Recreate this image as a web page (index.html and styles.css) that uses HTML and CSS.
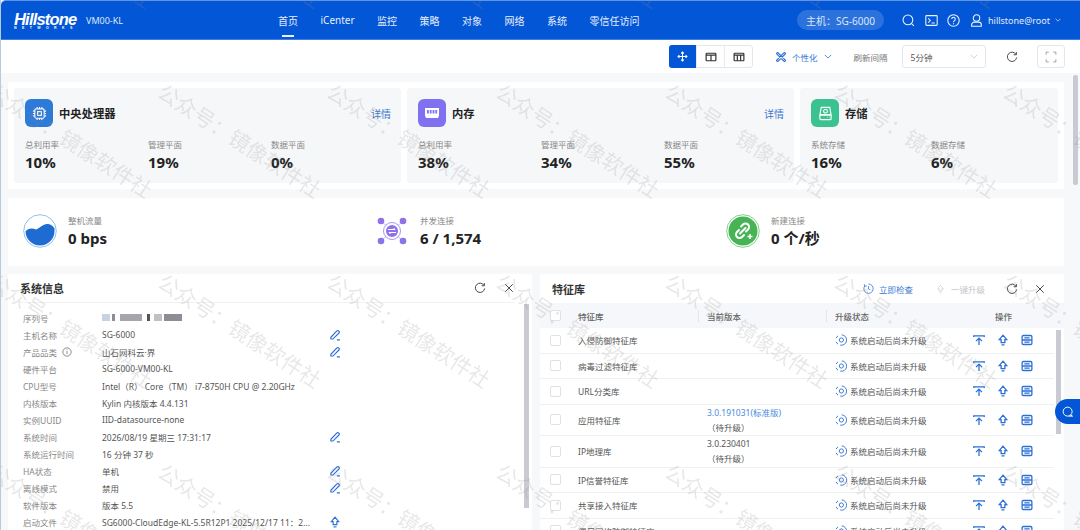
FILE: index.html
```html
<!DOCTYPE html>
<html lang="zh-CN">
<head>
    <meta charset="UTF-8">
    <title>Hillstone</title>
    <link rel="stylesheet" href="styles.css">
</head>
<body>
    <!-- shared icons -->
    <svg class="defs" width="0" height="0">
        <symbol id="i-refresh" viewBox="0 0 16 16"><path d="M13.4 4.6A6.2 6.2 0 1 0 14.2 8.6"/><path d="M13.8 1.4v3.6h-3.6"/></symbol>
        <symbol id="i-close" viewBox="0 0 16 16"><path d="M3 3l10 10M13 3L3 13"/></symbol>
        <symbol id="i-edit" viewBox="0 0 16 16"><path d="M2.5 11 10.6 2.6a1.6 1.6 0 0 1 2.3 0l.4.4a1.6 1.6 0 0 1 0 2.3L5.2 13.4H2.5z"/><path d="M10.5 14.500h4"/></symbol>
        <symbol id="i-top" viewBox="0 0 16 16"><path d="M1 4V2.500h14V4"/><path d="M8 14.500V6M4 9.500 8 5.500l4 4"/></symbol>
        <symbol id="i-up" viewBox="0 0 16 16"><path d="M8 1.500 13 7.500H10.500V11.500H5.500V7.500H3z"/><path d="M6 14.500h4"/></symbol>
        <symbol id="i-rack" viewBox="0 0 16 16"><rect x="1.500" y="2" width="13" height="12" rx="1.500"/><path d="M1.500 8h13M4.500 5.200h7M4.500 10.900h7"/></symbol>
        <symbol id="i-status" viewBox="0 0 16 16"><path d="M9 1.200a6.900 6.900 0 1 1-2 13.600"/><path d="M1.500 5.500A6.900 6.900 0 0 1 4 2.500M4 13.500a6.900 6.900 0 0 1-2.500-3"/><circle cx="8.500" cy="8" r="2.800"/></symbol>
    </svg>

    <div class="app">
        <!-- Top navigation -->
        <header class="topbar">
            <div class="logo">
                <span class="logo-name">Hillstone</span>
                <span class="logo-sub">NETWORKS</span>
            </div>
            <span class="device">VM00-KL</span>
            <nav class="nav">
                <a class="nav-item active">首页</a>
                <a class="nav-item">iCenter</a>
                <a class="nav-item">监控</a>
                <a class="nav-item">策略</a>
                <a class="nav-item">对象</a>
                <a class="nav-item">网络</a>
                <a class="nav-item">系统</a>
                <a class="nav-item">零信任访问</a>
            </nav>
            <span class="host">主机：SG-6000</span>
            <div class="top-icons">
                <svg class="top-icon" viewBox="0 0 16 16"><circle cx="7.300" cy="7.300" r="6"/><path d="M11.700 11.700l3 3"/></svg>
                <svg class="top-icon" viewBox="0 0 16 16"><rect x="1" y="2" width="14" height="12" rx="1"/><path d="M4 5.500 6.500 8 4 10.500M8 11h4"/></svg>
                <svg class="top-icon" viewBox="0 0 16 16"><circle cx="8" cy="8" r="7"/><path d="M5.800 6.200a2.200 2.200 0 1 1 3.400 1.900C8.500 8.600 8 9 8 10M8 11.500v1"/></svg>
                <svg class="top-icon" viewBox="0 0 16 16"><circle cx="8" cy="5" r="4"/><path d="M2 15v-1.500A3.500 3.500 0 0 1 5.500 10h5a3.500 3.500 0 0 1 3.500 3.500V15z"/></svg>
            </div>
            <span class="user">hillstone@root</span>
            <svg class="user-caret" viewBox="0 0 10 6"><path d="M1 1l4 4 4-4"/></svg>
        </header>

        <!-- Toolbar -->
        <div class="toolbar">
            <div class="layout-btns">
                <span class="layout-btn on">
                    <svg viewBox="0 0 16 16"><path d="M8 2v12M2 8h12M6 3.500 8 1.500l2 2M6 12.500l2 2 2-2M3.500 6l-2 2 2 2M12.500 6l2 2-2 2"/></svg>
                </span>
                <span class="layout-btn">
                    <svg viewBox="0 0 16 16"><rect x="1.500" y="3" width="13" height="10" rx="1"/><path d="M1.500 5.500h13M8 5v8"/></svg>
                </span>
                <span class="layout-btn">
                    <svg viewBox="0 0 16 16"><rect x="1.500" y="3" width="13" height="10" rx="1"/><path d="M1.500 5.500h13M5.800 5v8M10.200 5v8"/></svg>
                </span>
            </div>
            <svg class="custom-icon" viewBox="0 0 16 16"><path d="M3.500 1.500 14.500 12.500a1.400 1.400 0 0 1-2 2L1.500 3.500a1.400 1.400 0 0 1 2-2zM12.500 1.500 1.500 12.500a1.400 1.400 0 0 0 2 2L14.500 3.500a1.400 1.400 0 0 0-2-2z"/></svg>
            <span class="custom-text">个性化</span>
            <svg class="custom-caret" viewBox="0 0 10 6"><path d="M1 1l4 4 4-4"/></svg>
            <span class="refresh-label">刷新间隔</span>
            <div class="select">
                <span>5分钟</span>
                <svg viewBox="0 0 10 6"><path d="M1 1l4 4 4-4"/></svg>
            </div>
            <svg class="tool-refresh ico"><use href="#i-refresh"/></svg>
            <span class="full-btn">
                <svg viewBox="0 0 16 16"><path d="M1.500 5V1.500H5M11 1.500h3.500V5M14.500 11v3.500H11M5 14.500H1.500V11"/></svg>
            </span>
        </div>

        <main class="main">
            <!-- Resource cards -->
            <section class="cards">
                <div class="card">
                    <div class="card-head">
                        <span class="card-icon cpu">
                            <svg viewBox="0 0 16 16"><rect x="3" y="3" width="10" height="10" rx="1.500"/><rect x="6" y="6" width="4" height="4"/><path d="M5.500 1v2M8 1v2M10.500 1v2M5.500 13v2M8 13v2M10.500 13v2M1 5.500h2M1 8h2M1 10.500h2M13 5.500h2M13 8h2M13 10.500h2"/></svg>
                        </span>
                        <h3 class="card-title">中央处理器</h3>
                        <a class="card-link">详情</a>
                    </div>
                    <div class="metrics">
                        <div><p class="metric-label">总利用率</p><p class="metric-value">10%</p></div>
                        <div><p class="metric-label">管理平面</p><p class="metric-value">19%</p></div>
                        <div><p class="metric-label">数据平面</p><p class="metric-value">0%</p></div>
                    </div>
                </div>
                <div class="card">
                    <div class="card-head">
                        <span class="card-icon mem">
                            <svg class="solid" viewBox="0 0 16 16"><path d="M1 3h14v8.500h-.800v1.500H1.800v-1.500H1z"/><path class="cut" d="M3 5h1.800v3.500H3zM5.800 5h1.800v3.500H5.800zM8.600 5h1.800v3.500H8.600zM11.300 5h1.800v3.500h-1.800z"/></svg>
                        </span>
                        <h3 class="card-title">内存</h3>
                        <a class="card-link">详情</a>
                    </div>
                    <div class="metrics">
                        <div><p class="metric-label">总利用率</p><p class="metric-value">38%</p></div>
                        <div><p class="metric-label">管理平面</p><p class="metric-value">34%</p></div>
                        <div><p class="metric-label">数据平面</p><p class="metric-value">55%</p></div>
                    </div>
                </div>
                <div class="card">
                    <div class="card-head">
                        <span class="card-icon disk">
                            <svg viewBox="0 0 16 16"><path d="M3.500 1.500h9l1.500 8H2z"/><rect x="2" y="9.500" width="12" height="5" rx="1"/><circle cx="8" cy="5.500" r="2"/><path d="M10 12h.500M12 12h.500"/></svg>
                        </span>
                        <h3 class="card-title">存储</h3>
                    </div>
                    <div class="metrics two">
                        <div><p class="metric-label">系统存储</p><p class="metric-value">16%</p></div>
                        <div><p class="metric-label">数据存储</p><p class="metric-value">6%</p></div>
                    </div>
                </div>
            </section>

            <!-- Traffic summary -->
            <section class="stats">
                <div class="stat">
                    <svg class="stat-icon" viewBox="0 0 34 34">
                        <circle cx="17" cy="17" r="16.300" fill="#fff" stroke="#8fc2ee"/>
                        <path d="M3 17C4.500 14.500 9 13.500 13 15.500 17 14 20 9.500 25 10 28 10.500 30 12 31.500 14.500V17A14.500 14.500 0 0 1 2.500 17z" fill="#1e6bd2"/>
                    </svg>
                    <div><p class="metric-label">整机流量</p><p class="metric-value">0 bps</p></div>
                </div>
                <div class="stat">
                    <svg class="stat-icon" viewBox="0 0 34 34">
                        <path d="M6 7l22 20M28 7 6 27" stroke="#c9bdf5" fill="none"/>
                        <circle cx="6" cy="7" r="3.300" fill="#8d72e8"/><circle cx="28" cy="7" r="3.300" fill="#8d72e8"/>
                        <circle cx="6" cy="27" r="3.300" fill="#8d72e8"/><circle cx="28" cy="27" r="3.300" fill="#8d72e8"/>
                        <circle cx="17" cy="17" r="8.500" fill="#fff" stroke="#a898f0"/>
                        <circle cx="17" cy="17" r="6" fill="#8d72e8"/>
                        <path d="M13 15.500h7l-1.500-1.500M21 18.500h-7l1.500 1.500" stroke="#fff" fill="none"/>
                    </svg>
                    <div><p class="metric-label">并发连接</p><p class="metric-value">6 / 1,574</p></div>
                </div>
                <div class="stat">
                    <svg class="stat-icon" viewBox="0 0 34 34">
                        <circle cx="17" cy="17" r="16.300" fill="#fff" stroke="#7fd08a"/>
                        <circle cx="17" cy="17" r="14.500" fill="#46b455"/>
                        <path d="M15 12.500l2-2a3.500 3.500 0 0 1 5 5l-2 2M18 21l-2 2a3.500 3.500 0 0 1-5-5l2-2M14 19.500l5.500-5.500" stroke="#fff" stroke-width="2" stroke-linecap="round" fill="none"/>
                        <path d="M21.500 22.500h5M24 20v5" stroke="#fff" stroke-width="1.500"/>
                    </svg>
                    <div><p class="metric-label">新建连接</p><p class="metric-value">0 个/秒</p></div>
                </div>
            </section>

            <section class="bottom">
                <!-- System info -->
                <div class="panel">
                    <div class="panel-head left-head">
                        <h3 class="panel-title">系统信息</h3>
                        <svg class="ico head-refresh"><use href="#i-refresh"/></svg>
                        <svg class="ico head-close"><use href="#i-close"/></svg>
                    </div>
                    <div class="info">
                        <div class="info-row"><span class="info-label">序列号</span><span class="serial"><i class="s1"></i><i class="s2"></i><i class="s3"></i><i class="s4"></i><i class="s5"></i><i class="s6"></i></span></div>
                        <div class="info-row"><span class="info-label">主机名称</span><span>SG-6000</span><svg class="ico edit"><use href="#i-edit"/></svg></div>
                        <div class="info-row"><span class="info-label">产品品类 <svg class="info-tip" viewBox="0 0 12 12"><circle cx="6" cy="6" r="5"/><path d="M6 5v3.500M6 3v1"/></svg></span><span>山石网科云·界</span><svg class="ico edit"><use href="#i-edit"/></svg></div>
                        <div class="info-row"><span class="info-label">硬件平台</span><span>SG-6000-VM00-KL</span></div>
                        <div class="info-row"><span class="info-label">CPU型号</span><span>Intel（R） Core（TM） i7-8750H CPU @ 2.20GHz</span></div>
                        <div class="info-row"><span class="info-label">内核版本</span><span>Kylin 内核版本 4.4.131</span></div>
                        <div class="info-row"><span class="info-label">实例UUID</span><span>IID-datasource-none</span></div>
                        <div class="info-row"><span class="info-label">系统时间</span><span>2026/08/19 星期三 17:31:17</span><svg class="ico edit"><use href="#i-edit"/></svg></div>
                        <div class="info-row"><span class="info-label">系统运行时间</span><span>16 分钟 37 秒</span></div>
                        <div class="info-row"><span class="info-label">HA状态</span><span>单机</span><svg class="ico edit"><use href="#i-edit"/></svg></div>
                        <div class="info-row"><span class="info-label">离线模式</span><span>禁用</span><svg class="ico edit"><use href="#i-edit"/></svg></div>
                        <div class="info-row"><span class="info-label">软件版本</span><span>版本 5.5</span></div>
                        <div class="info-row"><span class="info-label">启动文件</span><span>SG6000-CloudEdge-KL-5.5R12P1 2025/12/17 11：2...</span><svg class="ico edit"><use href="#i-up"/></svg></div>
                    </div>
                    <div class="scroll-thumb info-thumb"></div>
                </div>

                <!-- Signature library -->
                <div class="panel">
                    <div class="panel-head right-head">
                        <h3 class="panel-title">特征库</h3>
                        <svg class="check-icon" viewBox="0 0 16 16"><path d="M8 1.500A6.800 6.800 0 1 1 2.500 4.300M1.800 1.800l.7 3 3-.5M8 4.500V8.500l2.500 1.500"/></svg>
                        <a class="check-now">立即检查</a>
                        <svg class="upgrade-icon" viewBox="0 0 16 16"><path d="M8 1.500 13 7.500H10.500V11.500H5.500V7.500H3z"/><path d="M6 14.500h4"/></svg>
                        <span class="upgrade-all">一键升级</span>
                        <svg class="ico lib-refresh"><use href="#i-refresh"/></svg>
                        <svg class="ico lib-close"><use href="#i-close"/></svg>
                    </div>
                    <div class="lib-row lib-header">
                        <span class="box"></span>
                        <span>特征库</span>
                        <span class="col-sep">当前版本</span>
                        <span class="col-sep">升级状态</span>
                        <span class="ops-title">操作</span>
                    </div>
                    <div class="lib-row">
                        <span class="box"></span><span>入侵防御特征库</span><span></span>
                        <span class="status"><svg class="ico st"><use href="#i-status"/></svg>系统启动后尚未升级</span>
                        <span class="ops"><svg class="ico op"><use href="#i-top"/></svg><svg class="ico op"><use href="#i-up"/></svg><svg class="ico op"><use href="#i-rack"/></svg></span>
                    </div>
                    <div class="lib-row">
                        <span class="box"></span><span>病毒过滤特征库</span><span></span>
                        <span class="status"><svg class="ico st"><use href="#i-status"/></svg>系统启动后尚未升级</span>
                        <span class="ops"><svg class="ico op"><use href="#i-top"/></svg><svg class="ico op"><use href="#i-up"/></svg><svg class="ico op"><use href="#i-rack"/></svg></span>
                    </div>
                    <div class="lib-row">
                        <span class="box"></span><span>URL分类库</span><span></span>
                        <span class="status"><svg class="ico st"><use href="#i-status"/></svg>系统启动后尚未升级</span>
                        <span class="ops"><svg class="ico op"><use href="#i-top"/></svg><svg class="ico op"><use href="#i-up"/></svg><svg class="ico op"><use href="#i-rack"/></svg></span>
                    </div>
                    <div class="lib-row tall">
                        <span class="box"></span><span>应用特征库</span>
                        <span class="version"><a>3.0.191031(标准版)</a><em>（待升级）</em></span>
                        <span class="status"><svg class="ico st"><use href="#i-status"/></svg>系统启动后尚未升级</span>
                        <span class="ops"><svg class="ico op"><use href="#i-top"/></svg><svg class="ico op"><use href="#i-up"/></svg><svg class="ico op"><use href="#i-rack"/></svg></span>
                    </div>
                    <div class="lib-row tall">
                        <span class="box"></span><span>IP地理库</span>
                        <span class="version"><b>3.0.230401</b><em>（待升级）</em></span>
                        <span class="status"><svg class="ico st"><use href="#i-status"/></svg>系统启动后尚未升级</span>
                        <span class="ops"><svg class="ico op"><use href="#i-top"/></svg><svg class="ico op"><use href="#i-up"/></svg><svg class="ico op"><use href="#i-rack"/></svg></span>
                    </div>
                    <div class="lib-row">
                        <span class="box"></span><span>IP信誉特征库</span><span></span>
                        <span class="status"><svg class="ico st"><use href="#i-status"/></svg>系统启动后尚未升级</span>
                        <span class="ops"><svg class="ico op"><use href="#i-top"/></svg><svg class="ico op"><use href="#i-up"/></svg><svg class="ico op"><use href="#i-rack"/></svg></span>
                    </div>
                    <div class="lib-row">
                        <span class="box"></span><span>共享接入特征库</span><span></span>
                        <span class="status"><svg class="ico st"><use href="#i-status"/></svg>系统启动后尚未升级</span>
                        <span class="ops"><svg class="ico op"><use href="#i-top"/></svg><svg class="ico op"><use href="#i-up"/></svg><svg class="ico op"><use href="#i-rack"/></svg></span>
                    </div>
                    <div class="lib-row">
                        <span class="box"></span><span>僵尸网络防御特征库</span><span></span>
                        <span class="status"><svg class="ico st"><use href="#i-status"/></svg>系统启动后尚未升级</span>
                        <span class="ops"><svg class="ico op"><use href="#i-top"/></svg><svg class="ico op"><use href="#i-up"/></svg><svg class="ico op"><use href="#i-rack"/></svg></span>
                    </div>
                    <div class="scroll-thumb lib-thumb"></div>
                </div>
            </section>
        </main>

        <div class="page-thumb"></div>

        <!-- Floating chat button -->
        <span class="chat">
            <svg viewBox="0 0 16 16"><circle cx="7.500" cy="7.500" r="6"/><path d="M9 13.500h5.500M11.500 11.500l2 2"/></svg>
        </span>

        <!-- Watermark layer -->
        <svg class="watermark" width="1080" height="530">
            <defs>
                <pattern id="wm" patternUnits="userSpaceOnUse" x="-13" y="-105" width="169" height="190">
                    <g class="wm-text">
                        <text transform="translate(-169 11) rotate(33)">公众号：镜像软件社</text>
                        <text transform="translate(0 11) rotate(33)">公众号：镜像软件社</text>
                    </g>
                </pattern>
            </defs>
            <rect width="1080" height="530" fill="url(#wm)"/>
        </svg>
    </div>
</body>
</html>
```

FILE: styles.css
```css
* { box-sizing: border-box; }

html, body { margin: 0; height: 100%; }

body {
    width: 1080px;
    height: 530px;
    overflow: hidden;
    background: #f7f8fa;
    font-family: "Noto Sans", "Noto Sans CJK SC", sans-serif;
    font-size: 8.5px;
    color: #555;
}

p, h3 { margin: 0; }
a { color: inherit; }

.defs { position: absolute; }

.app {
    position: relative;
    width: 1080px;
    height: 530px;
    overflow: hidden;
    border-left: 1px solid #b8cbdc;
}

/* generic icon from the symbols */
.ico { width: 12px; height: 12px; fill: none; stroke: currentColor; stroke-width: 1.3; flex: none; }

/* Top navigation */
.topbar {
    display: flex;
    align-items: center;
    height: 40px;
    padding-left: 13px;
    background: #0356d6;
    border-top: 1px solid #5f95e4;
    border-bottom: 1px solid #3d80e2;
    border-top-left-radius: 5px;
    color: #fff;
}

.logo { display: flex; flex-direction: column; width: 72px; margin-top: 2px; line-height: 1; }
.logo-name {
    font-family: "Liberation Sans", sans-serif;
    font-size: 16.500px;
    font-weight: bold;
    font-style: italic;
    letter-spacing: -0.8px;
    height: 14px;
    line-height: 14px;
}
.logo-sub {
    font-family: "Liberation Sans", sans-serif;
    font-size: 3.5px;
    font-weight: bold;
    letter-spacing: 5.4px;
    margin-top: 1px;
}

.device { width: 192px; font-size: 9px; color: #dde8fb; }

.nav { display: flex; gap: 22.500px; height: 100%; align-items: center; width: 519px; }
.nav-item { position: relative; font-size: 10px; color: #e6eefc; }
.nav-item.active::after {
    content: "";
    position: absolute;
    left: 4px;
    right: 4px;
    bottom: -9px;
    height: 2px;
    background: #e8f0ff;
}

.host {
    display: flex;
    align-items: center;
    width: 87px;
    height: 20px;
    padding-left: 9px;
    border-radius: 10px;
    background: #2c72dd;
    color: #dbe6fa;
    font-size: 10px;
    white-space: nowrap;
}

.top-icons { display: flex; gap: 9.500px; margin-left: 18px; }
.top-icon { width: 13px; height: 13px; fill: none; stroke: #eef4ff; stroke-width: 1.3; }

.user { margin-left: 5.500px; font-size: 9px; color: #e3ecfc; }
.user-caret { width: 6px; height: 4px; margin-left: 5px; fill: none; stroke: #e3ecfc; stroke-width: 1.2; }

/* Toolbar */
.toolbar {
    display: flex;
    align-items: center;
    height: 33px;
    padding-left: 668px;
    background: #fff;
}

.layout-btns { display: flex; height: 23px; border: 1px solid #e4e6ea; border-radius: 3px; width: 84px; }
.layout-btn { flex: 1; display: flex; align-items: center; justify-content: center; border-left: 1px solid #e8eaee; }
.layout-btn:first-child { border-left: 0; }
.layout-btn svg { width: 12px; height: 12px; fill: none; stroke: #333; stroke-width: 1.6; }
.layout-btn.on { background: #0356d6; margin: -1px 0 -1px -1px; border-radius: 3px 0 0 3px; }
.layout-btn.on svg { width: 11px; height: 11px; stroke: #fff; stroke-width: 1.5; }

.custom-icon { width: 10px; height: 10px; margin-left: 23px; fill: none; stroke: #2a6fd6; stroke-width: 1.9; }
.custom-text { margin-left: 6px; color: #3c7ddb; }
.custom-caret { width: 8px; height: 5px; margin-left: 6px; fill: none; stroke: #3c7ddb; stroke-width: 1.1; }
.refresh-label { margin-left: 22px; color: #777; }

.select {
    display: flex;
    align-items: center;
    justify-content: space-between;
    width: 84px;
    height: 23px;
    margin-left: 14px;
    padding: 0 7px 0 8px;
    border: 1px solid #e4e6ea;
    border-radius: 3px;
    color: #555;
}
.select svg { width: 8px; height: 5px; fill: none; stroke: #c4c7cc; stroke-width: 1; }

.tool-refresh { margin-left: 20px; color: #444; }

.full-btn {
    display: flex;
    align-items: center;
    justify-content: center;
    width: 28px;
    height: 23px;
    margin-left: 19px;
    border: 1px solid #e4e6ea;
    border-radius: 3px;
}
.full-btn svg { width: 12px; height: 12px; fill: none; stroke: #888; stroke-width: 1; }

/* Main area */
.main { display: flex; flex-direction: column; gap: 8.500px; width: 1063px; padding: 9px 0 0 7px; }

.cards {
    display: grid;
    grid-template-columns: 3fr 3fr 2fr;
    gap: 6px;
    padding: 6px;
    background: #fff;
}

.card { height: 95px; padding: 11px 7px 0 11px; background: #f6f7f9; border-radius: 3px; }

.card-head { display: flex; align-items: center; height: 28px; }
.card-icon {
    display: flex;
    align-items: center;
    justify-content: center;
    width: 28px;
    height: 28px;
    border-radius: 6px;
}
.card-icon svg { width: 15px; height: 15px; fill: none; stroke: #fff; stroke-width: 1.2; }
.card-icon svg.solid { width: 16px; height: 16px; fill: #fff; stroke: none; }
.card-icon svg .cut { fill: #8170f0; }
.card-icon.cpu { background: #2d7ad8; }
.card-icon.mem { background: #8170f0; }
.card-icon.disk { background: #3cc190; }

.card-title { margin-left: 6px; font-size: 11.300px; font-weight: 700; color: #222; }
.card-link { margin-left: auto; margin-right: 3px; font-size: 10px; color: #3a78d4; }

.metrics { display: grid; grid-template-columns: repeat(3, 1fr); margin-top: 11px; }
.metrics.two { grid-template-columns: 120px 120px; }

.metric-label { font-size: 8.500px; line-height: 13px; color: #888; }
.metric-value { font-size: 15px; font-weight: 700; line-height: 20px; color: #222; margin-top: 1px; }

.stats {
    display: grid;
    grid-template-columns: 352px 351px 1fr;
    align-items: center;
    height: 68px;
    padding: 0 0 1px 15px;
    background: #fff;
}
.stat { display: flex; align-items: center; gap: 11px; }
.stat-icon { width: 34px; height: 34px; flex: none; }

.bottom { display: grid; grid-template-columns: 524px 524px; gap: 8px; }

.panel { position: relative; height: 260px; overflow: hidden; background: #fff; border-radius: 3px; }

.panel-head { display: flex; align-items: center; height: 29px; }
.left-head { margin-left: 12px; margin-right: 17px; border-bottom: 1px solid #f1f2f4; }
.right-head { padding-left: 12px; }
.panel-title { font-size: 11px; font-weight: 700; color: #333; }

.head-refresh { margin-left: auto; color: #444; }
.head-close { margin-left: 17px; color: #444; }

/* System info rows */
.info { padding: 6px 0 0 15px; }
.info-row { display: flex; align-items: center; height: 17px; white-space: nowrap; }
.info-row > span:nth-child(2) { width: 227px; }
.info-label { display: flex; align-items: center; width: 79px; color: #888; }
.info-tip { width: 10px; height: 10px; margin-left: 5px; fill: none; stroke: #777; stroke-width: 1; }
.edit { color: #2a6fd6; stroke-width: 1.5; }

.serial { display: flex; align-items: center; gap: 2px; filter: blur(0.6px); height: 8px; }
.serial i { display: block; height: 7px; background: #8d8d96; }
.serial .s1 { width: 8px; background: #c9d3df; }
.serial .s2 { width: 3px; }
.serial .s3 { width: 22px; background: #a5a5ad; margin-left: 3px; }
.serial .s4 { width: 3px; background: #555; margin-left: 3px; }
.serial .s5 { width: 8px; background: #c0c0c6; margin-left: 2px; }
.serial .s6 { width: 18px; background: #8d8d96; }

.scroll-thumb { position: absolute; width: 5px; background: #c9cad2; }
.info-thumb { left: 516px; top: 30px; height: 204px; }
.lib-thumb { left: 516px; top: 56px; height: 104px; }
.page-thumb { position: absolute; left: 1072px; top: 75px; width: 5px; height: 110px; background: #c9cad2; border-radius: 2px; }

/* Signature library */
.check-icon { width: 11px; height: 11px; margin-left: 278px; fill: none; stroke: #3a78d4; stroke-width: 1.2; }
.check-now { margin-left: 5px; color: #3a78d4; }
.upgrade-icon { width: 9px; height: 10px; margin-left: 23px; fill: none; stroke: #c8cacd; stroke-width: 1.2; }
.upgrade-all { margin-left: 6px; color: #c4c6ca; }
.lib-refresh { margin-left: 21px; color: #444; }
.lib-close { margin-left: 16px; color: #444; }

.lib-row {
    display: grid;
    grid-template-columns: 28px 129px 128px 138px 1fr;
    align-items: center;
    width: 514px;
    height: 25.500px;
    padding-left: 10px;
    border-bottom: 1px solid #eff0f2;
}
.lib-row.tall { height: 31.500px; }

.lib-header { width: 524px; height: 25px; background: #f5f7fa; border-bottom: 0; font-weight: 500; color: #666; }
.col-sep { position: relative; }
.col-sep::before {
    content: "";
    position: absolute;
    left: -9px;
    top: 0;
    width: 1px;
    height: 12px;
    background: #e4e6ea;
}
.ops-title { padding-left: 22px; }

.box { display: block; width: 11px; height: 11px; background: #fff; border: 1px solid #dfe1e5; border-radius: 2px; }

.version { display: flex; flex-direction: column; line-height: 15px; }
.version a { color: #4c8bdc; }
.version b { font-weight: 400; }
.version em { font-style: normal; }

.status { display: flex; align-items: center; gap: 3px; white-space: nowrap; }
.st { color: #3a78d4; width: 12px; height: 12px; }
.ops { display: flex; gap: 12px; }
.op { color: #2a6fd6; stroke-width: 1.7; }

.chat {
    position: absolute;
    right: 0;
    top: 399px;
    display: flex;
    align-items: center;
    justify-content: center;
    width: 25px;
    height: 25px;
    background: #0356d6;
    border-radius: 13px 0 0 13px;
}
.chat svg { width: 12px; height: 12px; fill: none; stroke: #fff; stroke-width: 1.3; }

/* Watermark */
.watermark { position: absolute; left: -1px; top: 0; pointer-events: none; }
.wm-text { font-size: 21px; fill: #8b8b8b; opacity: 0.2; font-family: "Noto Sans CJK SC", sans-serif; }
```
